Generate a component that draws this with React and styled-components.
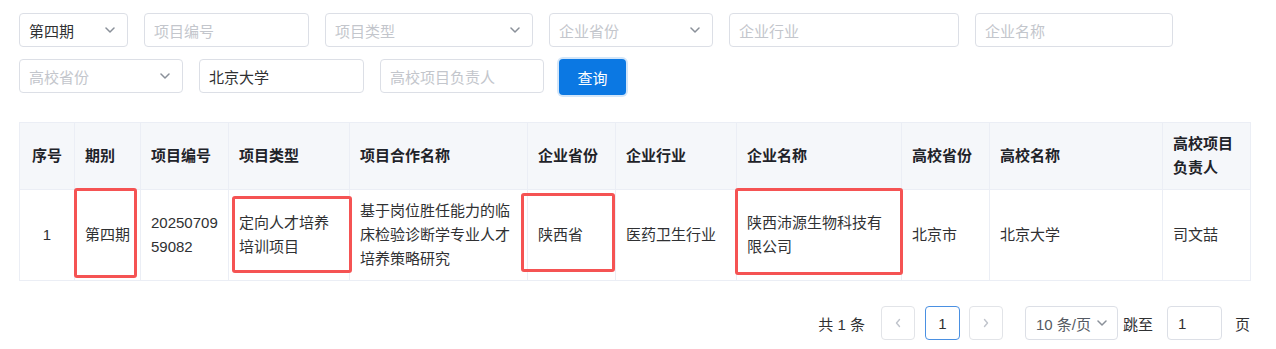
import styled, { createGlobalStyle } from "styled-components";

const GlobalStyle = createGlobalStyle`
  body {
    margin: 0;
    background: #fff;
    font-family: "Liberation Sans", "Noto Sans CJK SC", sans-serif;
    color: #303133;
  }
`;

const Page = styled.div`
  padding: 13px 19px;
  width: 1231px;
`;

const Filters = styled.div`
  display: flex;
  flex-wrap: wrap;
  column-gap: 16px;
  row-gap: 12px;
  width: 1240px;
`;

const Field = styled.div`
  box-sizing: border-box;
  width: ${(p) => p.$w}px;
  height: ${(p) => p.$h || 34}px;
  border: 1px solid #dcdfe6;
  border-radius: 4px;
  padding: 0 12px 0 9px;
  display: flex;
  align-items: center;
  justify-content: space-between;
  font-size: 15px;
  color: ${(p) => (p.$placeholder ? "#c3c6cc" : "#303133")};
`;

const Chevron = ({ color = "#8a9099" }) => (
  <svg width="10" height="6" viewBox="0 0 10 6" fill="none">
    <path d="M1 1l4 4 4-4" stroke={color} strokeWidth="1.5" strokeLinecap="round" strokeLinejoin="round" />
  </svg>
);

const Select = ({ w, value, placeholder }) => (
  <Field $w={w} $placeholder={!value}>
    <span>{value || placeholder}</span>
    <Chevron />
  </Field>
);

const Input = ({ w, value, placeholder }) => (
  <Field $w={w} $placeholder={!value}>
    <span>{value || placeholder}</span>
  </Field>
);

const QueryButton = styled.button`
  box-sizing: border-box;
  width: 67px;
  height: 36px;
  border: none;
  border-radius: 4px;
  background: #0b78e3;
  box-shadow: 0 0 0 2px #d3e6f9;
  color: #fff;
  font-family: inherit;
  font-size: 15px;
  margin-left: -1px;
`;

const TableWrap = styled.div`
  position: relative;
  margin-top: 27px;
  width: 1231px;
`;

const Table = styled.table`
  border-collapse: collapse;
  table-layout: fixed;
  width: 1231px;
  font-size: 15px;
  line-height: 24px;
`;

const Th = styled.th`
  background: #f5f7fa;
  border: 1px solid #ebeef5;
  padding: 9px 10px;
  text-align: ${(p) => (p.$center ? "center" : "left")};
  font-weight: bold;
  color: #1f2329;
  vertical-align: middle;
`;

const Td = styled.td`
  border: 1px solid #ebeef5;
  padding: 9px 10px;
  text-align: ${(p) => (p.$center ? "center" : "left")};
  color: #303133;
  vertical-align: middle;
  word-break: break-all;
`;

const Highlight = styled.div`
  position: absolute;
  box-sizing: border-box;
  left: ${(p) => p.$x}px;
  top: ${(p) => p.$y}px;
  width: ${(p) => p.$w}px;
  height: ${(p) => p.$h}px;
  border: 3px solid #f55353;
  border-radius: 3px;
  pointer-events: none;
`;

const Pager = styled.div`
  display: flex;
  justify-content: flex-end;
  align-items: center;
  margin-top: 25px;
  width: 1231px;
  font-size: 15px;
  color: #303133;
`;

const Total = styled.span`
  margin-right: 16px;
`;

const PageBtn = styled.div`
  box-sizing: border-box;
  width: ${(p) => (p.$active ? 35 : 34)}px;
  height: 34px;
  border: 1px solid ${(p) => (p.$active ? "#4a90e2" : "#e2e4e8")};
  border-radius: 4px;
  display: flex;
  align-items: center;
  justify-content: center;
  margin-left: ${(p) => p.$ml || 0}px;
  color: #303133;
`;

const Sizer = styled.div`
  box-sizing: border-box;
  width: 93px;
  height: 34px;
  margin-left: 22px;
  border: 1px solid #dcdfe6;
  border-radius: 4px;
  display: flex;
  align-items: center;
  justify-content: space-between;
  padding: 0 10px 0 10px;
  color: #555a63;
`;

const Label = styled.span`
  margin-left: ${(p) => p.$ml || 0}px;
`;

const JumpBox = styled.div`
  box-sizing: border-box;
  width: 55px;
  height: 34px;
  margin-left: 14px;
  border: 1px solid #dcdfe6;
  border-radius: 4px;
  display: flex;
  align-items: center;
  padding-left: 10px;
`;

const cols = [55, 66, 88, 121, 178, 88, 121, 165, 88, 173, 88];

const Arrow = ({ dir }) => (
  <svg width="8" height="10" viewBox="0 0 8 10" fill="none">
    <path
      d={dir === "left" ? "M5.5 1.5L2.5 5l3 3.5" : "M2.5 1.5L5.5 5l-3 3.5"}
      stroke="#c0c4cc"
      strokeWidth="1.4"
      strokeLinecap="round"
      strokeLinejoin="round"
    />
  </svg>
);

export default function App() {
  return (
    <>
      <GlobalStyle />
      <Page>
        <Filters>
          <Select w={109} value="第四期" />
          <Input w={165} placeholder="项目编号" />
          <Select w={208} placeholder="项目类型" />
          <Select w={164} placeholder="企业省份" />
          <Input w={230} placeholder="企业行业" />
          <Input w={198} placeholder="企业名称" />
          <Select w={164} placeholder="高校省份" />
          <Input w={165} value="北京大学" />
          <Input w={164} placeholder="高校项目负责人" />
          <QueryButton>查询</QueryButton>
        </Filters>

        <TableWrap>
          <Table>
            <colgroup>
              {cols.map((w, i) => (
                <col key={i} style={{ width: w }} />
              ))}
            </colgroup>
            <thead>
              <tr>
                <Th $center>序号</Th>
                <Th>期别</Th>
                <Th>项目编号</Th>
                <Th>项目类型</Th>
                <Th>项目合作名称</Th>
                <Th>企业省份</Th>
                <Th>企业行业</Th>
                <Th>企业名称</Th>
                <Th>高校省份</Th>
                <Th>高校名称</Th>
                <Th>高校项目负责人</Th>
              </tr>
            </thead>
            <tbody>
              <tr>
                <Td $center>1</Td>
                <Td>第四期</Td>
                <Td>2025070959082</Td>
                <Td>定向人才培养培训项目</Td>
                <Td>基于岗位胜任能力的临床检验诊断学专业人才培养策略研究</Td>
                <Td>陕西省</Td>
                <Td>医药卫生行业</Td>
                <Td>陕西沛源生物科技有限公司</Td>
                <Td>北京市</Td>
                <Td>北京大学</Td>
                <Td>司文喆</Td>
              </tr>
            </tbody>
          </Table>
          <Highlight $x={55} $y={66} $w={63} $h={90} />
          <Highlight $x={213} $y={74} $w={120} $h={77} />
          <Highlight $x={502} $y={71} $w={94} $h={79} />
          <Highlight $x={716} $y={66} $w={168} $h={87} />
        </TableWrap>

        <Pager>
          <Total>共 1 条</Total>
          <PageBtn>
            <Arrow dir="left" />
          </PageBtn>
          <PageBtn $active $ml={10}>1</PageBtn>
          <PageBtn $ml={9}>
            <Arrow dir="right" />
          </PageBtn>
          <Sizer>
            <span>10 条/页</span>
            <Chevron />
          </Sizer>
          <Label $ml={5}>跳至</Label>
          <JumpBox>1</JumpBox>
          <Label $ml={13}>页</Label>
        </Pager>
      </Page>
    </>
  );
}
